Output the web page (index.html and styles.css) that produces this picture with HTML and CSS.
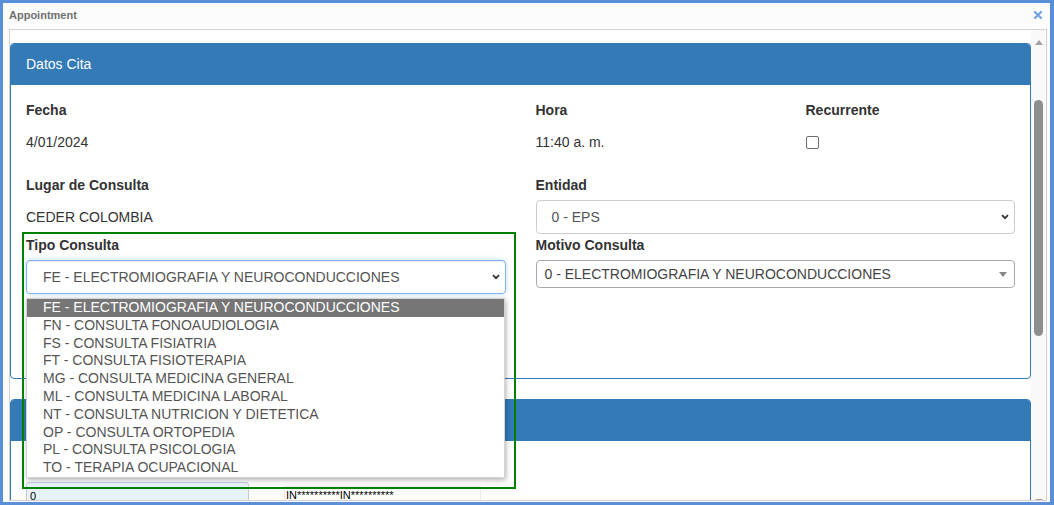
FILE: index.html
```html
<!DOCTYPE html>
<html lang="es">
<head>
<meta charset="utf-8">
<title>Appointment</title>
<link rel="stylesheet" href="styles.css">
</head>
<body>
<div class="window">
  <div class="titlebar">
    <span class="title">Appointment</span>
    <svg class="close" width="8" height="8" viewBox="0 0 8 8"><path d="M1 1L7 7M7 1L1 7" stroke="#6d9fe0" stroke-width="2" stroke-linecap="square"/></svg>
  </div>
  <div class="frame">
    <div class="content">
      <div class="panel">
        <div class="panel-heading">Datos Cita</div>
        <div class="panel-body p1">
          <div class="grid row1">
            <div class="field">
              <label class="lbl">Fecha</label>
              <div class="static">4/01/2024</div>
            </div>
            <div class="subgrid">
              <div class="field">
                <label class="lbl">Hora</label>
                <div class="static">11:40 a. m.</div>
              </div>
              <div class="field">
                <label class="lbl">Recurrente</label>
                <div class="static"><span class="checkbox"></span></div>
              </div>
            </div>
          </div>
          <div class="grid row2">
            <div class="field">
              <label class="lbl">Lugar de Consulta</label>
              <div class="static">CEDER COLOMBIA</div>
            </div>
            <div class="field">
              <label class="lbl">Entidad</label>
              <div class="select">
                <span>0 - EPS</span>
                <svg class="chev" width="8" height="6" viewBox="0 0 8 6"><path d="M1 1.2L4 4.2L7 1.2" fill="none" stroke="#333" stroke-width="1.8"/></svg>
              </div>
            </div>
          </div>
          <div class="grid row3">
            <div class="field tipo">
              <label class="lbl">Tipo Consulta</label>
              <div class="select-wrap">
                <div class="select focus">
                  <span>FE - ELECTROMIOGRAFIA Y NEUROCONDUCCIONES</span>
                  <svg class="chev" width="8" height="6" viewBox="0 0 8 6"><path d="M1 1.2L4 4.2L7 1.2" fill="none" stroke="#333" stroke-width="1.8"/></svg>
                </div>
                <ul class="options">
                  <li class="sel">FE - ELECTROMIOGRAFIA Y NEUROCONDUCCIONES</li>
                  <li>FN - CONSULTA FONOAUDIOLOGIA</li>
                  <li>FS - CONSULTA FISIATRIA</li>
                  <li>FT - CONSULTA FISIOTERAPIA</li>
                  <li>MG - CONSULTA MEDICINA GENERAL</li>
                  <li>ML - CONSULTA MEDICINA LABORAL</li>
                  <li>NT - CONSULTA NUTRICION Y DIETETICA</li>
                  <li>OP - CONSULTA ORTOPEDIA</li>
                  <li>PL - CONSULTA PSICOLOGIA</li>
                  <li>TO - TERAPIA OCUPACIONAL</li>
                </ul>
              </div>
              <div class="highlight"></div>
            </div>
            <div class="field">
              <label class="lbl">Motivo Consulta</label>
              <div class="select2">
                <span>0 - ELECTROMIOGRAFIA Y NEUROCONDUCCIONES</span>
                <span class="arrow"></span>
              </div>
            </div>
          </div>
        </div>
      </div>
      <div class="panel">
        <div class="panel-heading"></div>
        <div class="panel-body p2">
          <div class="cells">
            <div class="cell-a">0</div>
            <div class="cell-b">IN**********IN**********</div>
          </div>
        </div>
      </div>
    </div>
    <div class="scrollbar">
      <span class="sb-up"></span>
      <span class="sb-thumb"></span>
      <span class="sb-down"></span>
    </div>
  </div>
</div>
</body>
</html>
```
FILE: styles.css
```css
* { box-sizing: border-box; }
html, body { margin: 0; padding: 0; }
body {
  width: 1054px;
  height: 505px;
  overflow: hidden;
  font-family: "Liberation Sans", Arial, sans-serif;
  font-size: 14px;
  color: #333;
  background: #fff;
}
.window {
  width: 1054px;
  height: 505px;
  border: 3px solid #5a8ed6;
  border-right-width: 4px;
  background: #fcfcfc;
  display: flex;
  flex-direction: column;
}
.titlebar {
  height: 26px;
  flex: none;
  display: flex;
  align-items: center;
  justify-content: space-between;
  padding: 0 8px 2px 6px;
}
.title {
  font-size: 11px;
  font-weight: bold;
  color: #707070;
}
.close { display: block; }
.frame {
  flex: 1;
  min-height: 0;
  margin: 0 3px 1px 6px;
  border: 1px solid #d3d3d3;
  background: #fff;
  display: flex;
  overflow: hidden;
}
.content {
  flex: 1;
  min-width: 0;
  padding-top: 13px;
}
.panel {
  border: 1px solid #337ab7;
  border-radius: 4px;
  margin-bottom: 20px;
  background: #fff;
}
.panel-heading {
  background: #337ab7;
  color: #fff;
  padding: 10px 15px;
  line-height: 20px;
  min-height: 41px;
  border-bottom: 1px solid #337ab7;
  border-radius: 3px 3px 0 0;
}
.panel-body { padding: 15px 15px 84px; }
.panel-body.p2 { padding: 41px 15px 0; }
.grid {
  display: grid;
  grid-template-columns: 1fr 1fr;
  column-gap: 30px;
}
.subgrid {
  display: grid;
  grid-template-columns: 240px 1fr;
  column-gap: 30px;
}
.row1 { margin-bottom: 16px; }
.row3 { margin-top: 1px; }
.field { position: relative; }
.lbl {
  display: block;
  font-weight: bold;
  line-height: 20px;
  margin-bottom: 5px;
}
.static {
  padding: 7px 0;
  line-height: 20px;
  min-height: 34px;
}
.checkbox {
  display: block;
  width: 13px;
  height: 13px;
  margin-top: 4px;
  border: 1px solid #6f6f6f;
  border-radius: 2px;
  background: #fff;
}
.select {
  height: 34px;
  border: 1px solid #ccc;
  border-radius: 4px;
  padding: 0 5px 0 15px;
  display: flex;
  align-items: center;
  justify-content: space-between;
  color: #555;
  background: #fff;
}
.select.focus {
  padding-left: 16px;
  border-color: #80b4e6;
  box-shadow: inset 0 1px 1px rgba(0,0,0,.075), 0 0 5px rgba(102,175,233,.45);
}
.chev { display: block; flex: none; }
.select-wrap { position: relative; }
.options {
  position: absolute;
  top: 38px;
  left: 0;
  width: 479px;
  margin: 0;
  padding: 0;
  list-style: none;
  background: #fff;
  border: 1px solid #d4d4d4;
  box-shadow: 1px 2px 5px rgba(0,0,0,.3);
  z-index: 4;
  color: #555;
}
.options li {
  line-height: 17.8px;
  padding-left: 16px;
  white-space: nowrap;
}
.options li.sel {
  background: #767676;
  color: #fff;
}
.highlight {
  position: absolute;
  left: -4px;
  top: -3px;
  width: 494px;
  height: 257px;
  border: 2px solid #008000;
  z-index: 5;
  pointer-events: none;
}
.select2 {
  height: 28px;
  border: 1px solid #aaa;
  border-radius: 4px;
  padding: 0 7px 0 8px;
  display: flex;
  align-items: center;
  justify-content: space-between;
  color: #444;
  background: #fff;
}
.arrow {
  width: 0;
  height: 0;
  border-left: 4px solid transparent;
  border-right: 4px solid transparent;
  border-top: 5px solid #888;
}
.cells {
  display: flex;
  align-items: flex-start;
  font-size: 11px;
  color: #000;
}
.cell-a {
  width: 223px;
  height: 30px;
  background: #e7f3fb;
  border: 1px solid #c3ccd4;
  border-radius: 3px;
  padding: 7px 3px;
  line-height: 13px;
}
.cell-b {
  width: 197px;
  height: 26px;
  margin-left: 35px;
  margin-top: 4px;
  border: 1px solid #ececec;
  padding: 2px 1px;
  line-height: 13px;
}
.scrollbar {
  width: 15px;
  flex: none;
  background: #f9f9f9;
  display: flex;
  flex-direction: column;
  align-items: center;
  padding-top: 10px;
}
.sb-up {
  width: 0;
  height: 0;
  border-left: 4px solid transparent;
  border-right: 4px solid transparent;
  border-bottom: 5px solid #a3a3a3;
}
.sb-thumb {
  width: 9px;
  height: 236px;
  margin-top: 55px;
  border-radius: 5px;
  background: #8e8e8e;
}
.sb-down {
  margin-top: auto;
  margin-bottom: -4px;
  width: 0;
  height: 0;
  border-left: 4px solid transparent;
  border-right: 4px solid transparent;
  border-top: 5px solid #a3a3a3;
}
```
